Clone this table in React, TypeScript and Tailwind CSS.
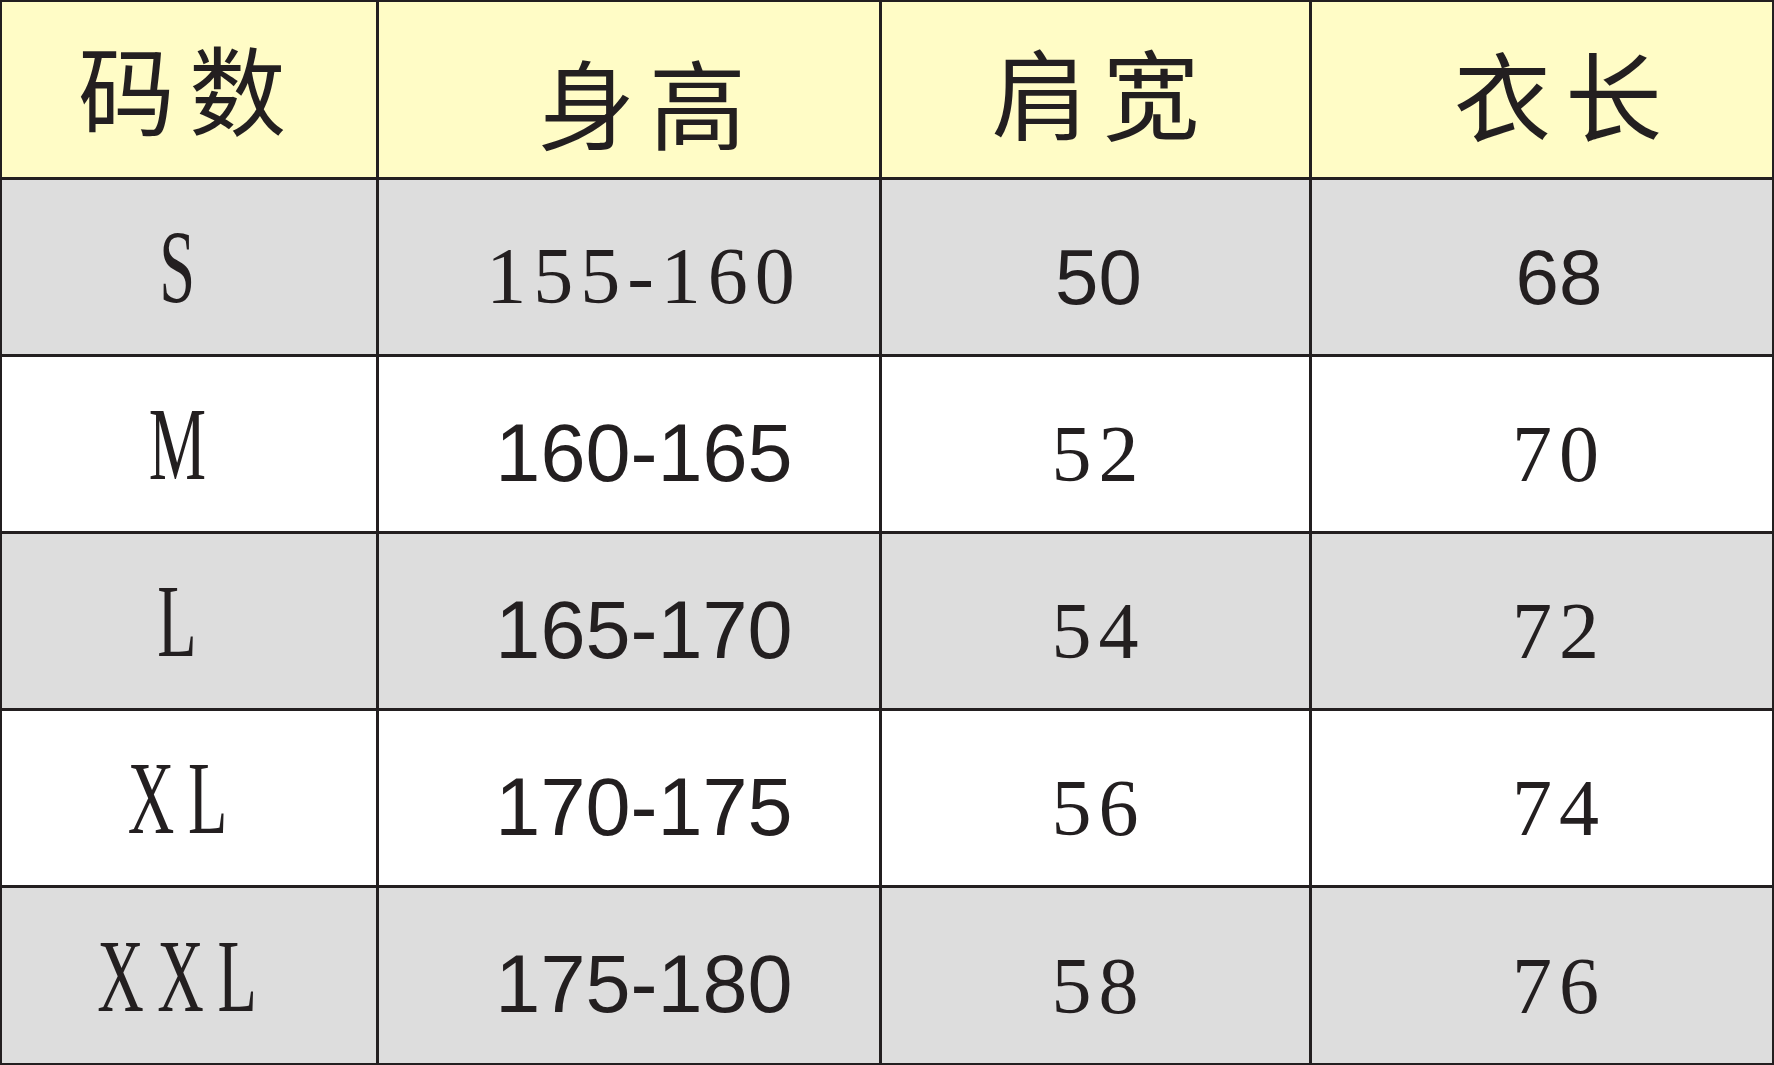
const headers = ["码数", "身高", "肩宽", "衣长"];

type Cell = { text: string; kind: "serif" | "sans" };
type Row = { size: string; height: Cell; shoulder: Cell; length: Cell; gray: boolean };

const rows: Row[] = [
  { size: "S", height: { text: "155-160", kind: "serif" }, shoulder: { text: "50", kind: "sans" }, length: { text: "68", kind: "sans" }, gray: true },
  { size: "M", height: { text: "160-165", kind: "sans" }, shoulder: { text: "52", kind: "serif" }, length: { text: "70", kind: "serif" }, gray: false },
  { size: "L", height: { text: "165-170", kind: "sans" }, shoulder: { text: "54", kind: "serif" }, length: { text: "72", kind: "serif" }, gray: true },
  { size: "XL", height: { text: "170-175", kind: "sans" }, shoulder: { text: "56", kind: "serif" }, length: { text: "74", kind: "serif" }, gray: false },
  { size: "XXL", height: { text: "175-180", kind: "sans" }, shoulder: { text: "58", kind: "serif" }, length: { text: "76", kind: "serif" }, gray: true },
];

function Num({ cell, wide }: { cell: Cell; wide?: boolean }) {
  if (cell.kind === "serif") {
    return (
      <span className="font-['Liberation_Serif',serif] text-[80px] leading-none tracking-[7px] text-[#231f20]">
        {cell.text}
      </span>
    );
  }
  return (
    <span
      className={
        "font-['Liberation_Sans',Arial,sans-serif] leading-none text-[#231f20] " +
        (wide ? "text-[81px]" : "text-[78px]")
      }
    >
      {cell.text}
    </span>
  );
}

export default function App() {
  return (
    <div className="w-[1774px] h-[1065px] bg-[#231f20] p-[2px] grid grid-cols-[374px_500px_427px_460px] grid-rows-[175px_174px_174px_174px_174px_175px] gap-[3px]">
      {headers.map((h, i) => (
        <div
          key={h}
          className={
            "bg-[#fffcc6] flex items-center justify-center font-['Noto_Sans_CJK_SC',sans-serif] text-[97px] leading-none tracking-[14px] text-[#231f20] " +
            (i === 0 ? "pb-[8px]" : i === 1 ? "pt-[20px] pl-[40px]" : i === 2 ? "pl-[14px]" : "pt-[4px] pl-[46px]")
          }
        >
          {h}
        </div>
      ))}
      {rows.map((r) => {
        const bg = r.gray ? "bg-[#dddddd]" : "bg-white";
        return [
          <div key={r.size + "a"} className={bg + " flex items-center justify-center pr-[10px]"}>
            <span className="font-['Liberation_Serif',serif] text-[104px] leading-none tracking-[22px] scale-x-[0.62] text-[#231f20]">
              {r.size}
            </span>
          </div>,
          <div key={r.size + "b"} className={bg + " flex items-center justify-center pl-[30px] pt-[18px]"}>
            <Num cell={r.height} wide />
          </div>,
          <div key={r.size + "c"} className={bg + " flex items-center justify-center pl-[6px] pt-[20px]"}>
            <Num cell={r.shoulder} />
          </div>,
          <div key={r.size + "d"} className={bg + " flex items-center justify-center pl-[34px] pt-[20px]"}>
            <Num cell={r.length} />
          </div>,
        ];
      })}
    </div>
  );
}
